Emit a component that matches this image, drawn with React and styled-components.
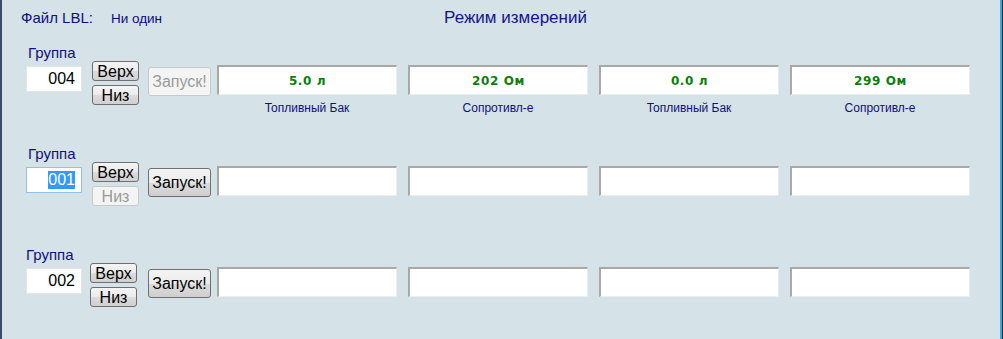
import React from "react";
import styled, { createGlobalStyle } from "styled-components";

const Global = createGlobalStyle`
  html, body { margin: 0; padding: 0; background: #d5e2e7; }
  body { font-family: "Liberation Sans", Arial, sans-serif; }
  * { box-sizing: border-box; }
`;

const Screen = styled.div`
  width: 1003px;
  height: 339px;
  background: #d5e2e7;
  border-left: 2px solid #3b4a68;
  box-shadow: inset -1px 0 #1c2b45, inset -3px 0 #39a6ef;
  overflow: hidden;
`;

const Header = styled.div`
  display: grid;
  grid-template-columns: 1fr auto 1fr;
  align-items: baseline;
  height: 44px;
  padding-top: 7px;
`;

const FileInfo = styled.div`
  display: flex;
  align-items: baseline;
  padding-left: 19px;
  color: #10107a;
`;

const FileLabel = styled.span`
  font-size: 15px;
  line-height: 20px;
`;

const FileValue = styled.span`
  margin-left: 18px;
  font-size: 13.5px;
  color: #0a0a80;
`;

const Title = styled.div`
  font-size: 17px;
  line-height: 22px;
  color: #14148a;
  padding-left: 26px;
`;

const Row = styled.div`
  display: flex;
  align-items: flex-start;
  height: 101px;
  padding-left: 24px;
`;

const GroupCol = styled.div`
  display: flex;
  flex-direction: column;
  width: 56px;
`;

const GroupLabel = styled.div`
  font-size: 15px;
  line-height: 17px;
  color: #10107a;
  padding-left: ${(p) => p.$indent}px;
`;

const GroupInput = styled.div`
  margin-top: 5px;
  height: 26px;
  width: 56px;
  background: #fff;
  border: 1px solid ${(p) => (p.$focused ? "#8fbfec" : "#e2e6e8")};
  display: flex;
  align-items: center;
  justify-content: flex-end;
  padding-right: 6px;
  font-size: 16px;
  color: #000;
`;

const Selected = styled.span`
  background: #3399ff;
  color: #fff;
  line-height: 18px;
`;

const MoveCol = styled.div`
  display: flex;
  flex-direction: column;
  gap: 4px;
  margin-top: 17px;
  margin-left: ${(p) => p.$offset}px;
`;

const Btn = styled.button`
  font-family: "Liberation Sans", Arial, sans-serif;
  font-size: 16px;
  padding: 0;
  border-radius: 3px;
  cursor: default;
  border: 1px solid ${(p) => (p.disabled ? "#c6cacc" : "#6f6f6f")};
  color: ${(p) => (p.disabled ? "#9a9a9a" : "#000")};
  background: ${(p) =>
    p.disabled
      ? "#f4f4f4"
      : "linear-gradient(#f4f4f4 0%, #ebebeb 50%, #dcdcdc 51%, #cfcfcf 100%)"};
`;

const MoveBtn = styled(Btn)`
  width: 47px;
  height: 20px;
  line-height: 17px;
`;

const LaunchBtn = styled(Btn)`
  width: 63px;
  height: 29px;
  margin-top: 23px;
  margin-left: ${(p) => p.$offset}px;
`;

const Fields = styled.div`
  display: flex;
  gap: 11px;
  margin-left: 6px;
  margin-top: 21px;
`;

const FieldCol = styled.div`
  display: flex;
  flex-direction: column;
  align-items: center;
  width: 180px;
`;

const Field = styled.div`
  width: 180px;
  height: 30px;
  background: #fff;
  border-top: 2px solid #a8a8a8;
  border-left: 2px solid #a8a8a8;
  border-right: 1px solid #e8eef0;
  border-bottom: 1px solid #e8eef0;
  display: flex;
  align-items: center;
  justify-content: center;
  font-family: "DejaVu Sans", Verdana, sans-serif;
  font-weight: bold;
  font-size: 12px;
  letter-spacing: 0.6px;
  color: #0a800a;
`;

const Caption = styled.div`
  margin-top: 6px;
  font-size: 12px;
  line-height: 14px;
  color: #10107a;
`;

const rows = [
  {
    group: "004",
    upDisabled: false,
    downDisabled: false,
    launchDisabled: true,
    focused: false,
    labelIndent: 2,
    btnOffset: 10,
    launchOffset: 9,
    fields: [
      { value: "5.0 л", caption: "Топливный Бак" },
      { value: "202 Ом", caption: "Сопротивл-е" },
      { value: "0.0 л", caption: "Топливный Бак" },
      { value: "299 Ом", caption: "Сопротивл-е" },
    ],
  },
  {
    group: "001",
    upDisabled: false,
    downDisabled: true,
    launchDisabled: false,
    focused: true,
    labelIndent: 2,
    btnOffset: 10,
    launchOffset: 9,
    fields: [{}, {}, {}, {}],
  },
  {
    group: "002",
    upDisabled: false,
    downDisabled: false,
    launchDisabled: false,
    focused: false,
    labelIndent: 0,
    btnOffset: 8,
    launchOffset: 11,
    fields: [{}, {}, {}, {}],
  },
];

export default function App() {
  return (
    <>
      <Global />
      <Screen>
        <Header>
          <FileInfo>
            <FileLabel>Файл LBL:</FileLabel>
            <FileValue>Ни один</FileValue>
          </FileInfo>
          <Title>Режим измерений</Title>
          <div />
        </Header>
        {rows.map((r, i) => (
          <Row key={i}>
            <GroupCol>
              <GroupLabel $indent={r.labelIndent}>Группа</GroupLabel>
              <GroupInput $focused={r.focused}>
                {r.focused ? <Selected>{r.group}</Selected> : r.group}
              </GroupInput>
            </GroupCol>
            <MoveCol $offset={r.btnOffset}>
              <MoveBtn disabled={r.upDisabled}>Верх</MoveBtn>
              <MoveBtn disabled={r.downDisabled}>Низ</MoveBtn>
            </MoveCol>
            <LaunchBtn disabled={r.launchDisabled} $offset={r.launchOffset}>
              Запуск!
            </LaunchBtn>
            <Fields>
              {r.fields.map((f, j) => (
                <FieldCol key={j}>
                  <Field>{f.value}</Field>
                  {f.caption && <Caption>{f.caption}</Caption>}
                </FieldCol>
              ))}
            </Fields>
          </Row>
        ))}
      </Screen>
    </>
  );
}
